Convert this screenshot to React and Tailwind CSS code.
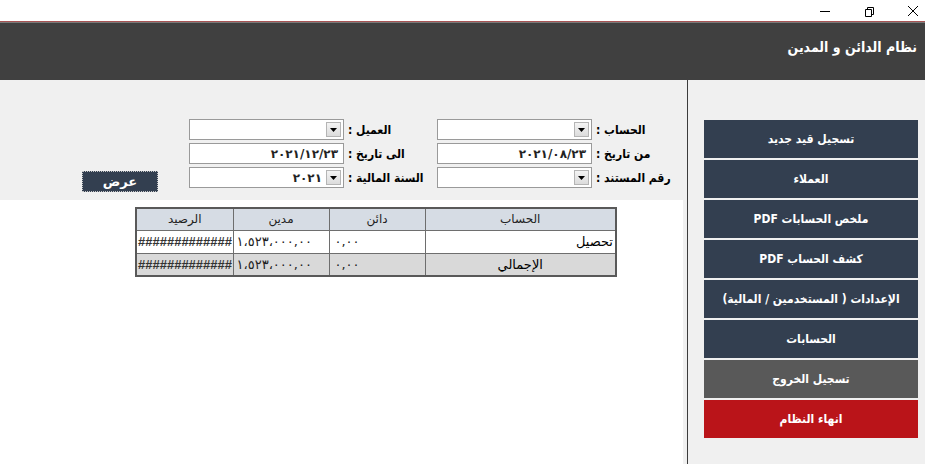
import React from 'react';

const menu = [
  { label: 'تسجيل قيد جديد', color: 'bg-[#333f50]' },
  { label: 'العملاء', color: 'bg-[#333f50]' },
  { label: 'ملخص الحسابات PDF', color: 'bg-[#333f50]' },
  { label: 'كشف الحساب PDF', color: 'bg-[#333f50]' },
  { label: 'الإعدادات ( المستخدمين / المالية)', color: 'bg-[#333f50]' },
  { label: 'الحسابات', color: 'bg-[#333f50]' },
  { label: 'تسجيل الخروج', color: 'bg-[#595959]' },
  { label: 'انهاء النظام', color: 'bg-[#ba1419]' },
];

const rows = [
  { name: 'تحصيل', bg: 'bg-white', align: 'text-right px-[2px]' },
  { name: 'الإجمالي', bg: 'bg-[#d9d9d9]', align: 'text-center' },
];

const Arrow = () => (
  <div className="absolute right-[2px] top-[2px] bottom-[2px] w-[15px] bg-gradient-to-b from-[#f4f4f4] to-[#dcdcdc] border border-[#b5b5b5] flex items-center justify-center">
    <svg width="7" height="4" viewBox="0 0 7 4">
      <path d="M0 0h7L3.5 4z" fill="#000" />
    </svg>
  </div>
);

const Field = ({ value, select }) => (
  <div className="relative w-[155px] h-[21px] bg-white border border-[#9a9a9a] flex items-center justify-end">
    <span dir="ltr" className={`text-[12px] font-bold text-[#222] ${select ? 'mr-[21px]' : 'mr-[5px]'}`}>{value}</span>
    {select && <Arrow />}
  </div>
);

const Label = ({ text, w }) => (
  <div dir="rtl" className={`${w} h-[21px] ml-[4px] flex items-center justify-end text-[12px] font-bold text-black whitespace-nowrap font-['DejaVu_Sans_Condensed','DejaVu_Sans',sans-serif]`}>
    {text}
  </div>
);

const App = () => {
  return (
    <div className="w-[925px] h-[464px] overflow-hidden bg-white font-['DejaVu_Sans',sans-serif]">
      <div className="h-[21px] flex items-center justify-end pr-[6px] gap-[32px]">
        <svg width="12" height="12" viewBox="0 0 12 12">
          <path d="M1 6.5h10" stroke="#000" strokeWidth="1" />
        </svg>
        <svg width="12" height="12" viewBox="0 0 12 12">
          <path d="M2.5 4.5h6v7h-6z M4.5 4.5V2.5h6v7h-2" stroke="#000" strokeWidth="1" fill="none" />
        </svg>
        <svg width="12" height="12" viewBox="0 0 12 12">
          <path d="M1 1l10 10M11 1L1 11" stroke="#000" strokeWidth="1" />
        </svg>
      </div>
      <div className="h-[1px] bg-[#a85454]" />
      <div className="h-[1px] bg-[#7a7a7a]" />
      <div className="h-[57px] bg-[#404040] flex justify-end pr-[8px] pt-[14px]">
        <h1 dir="rtl" className="text-white font-bold text-[14px] font-['DejaVu_Sans_Condensed','DejaVu_Sans',sans-serif]">نظام الدائن و المدين</h1>
      </div>

      <div className="flex h-[384px] bg-[#f0f0f0]">
        <div className="w-[683px] flex flex-col">
          <div className="h-[120px] flex pl-[82px] pt-[39px]">
            <div className="w-[76px] pt-[52px]">
              <button className="w-[76px] h-[21px] bg-[#333f50] border border-dotted border-[#c8c8c8] text-white font-bold text-[13px] leading-none flex items-center justify-center">
                عرض
              </button>
            </div>
            <div className="ml-[31px] flex flex-col gap-[3px]">
              <div className="flex">
                <Field select />
                <Label text="العميل :" w="w-[89px]" />
              </div>
              <div className="flex">
                <Field value="٢٠٢١/١٢/٢٣" />
                <Label text="الى  تاريخ :" w="w-[89px]" />
              </div>
              <div className="flex">
                <Field value="٢٠٢١" select />
                <Label text="السنة المالية :" w="w-[89px]" />
              </div>
            </div>
            <div className="flex flex-col gap-[3px]">
              <div className="flex">
                <Field select />
                <Label text="الحساب :" w="w-[83px]" />
              </div>
              <div className="flex">
                <Field value="٢٠٢١/٠٨/٢٣" />
                <Label text="من تاريخ :" w="w-[83px]" />
              </div>
              <div className="flex">
                <Field select />
                <Label text="رقم المستند :" w="w-[83px]" />
              </div>
            </div>
          </div>
          <div className="flex-1 bg-white pl-[135px] pt-[7px]">
            <table className="w-[482px] border-collapse border-2 border-[#595959] text-[12px] text-[#222] table-fixed">
              <thead>
                <tr className="h-[22px] bg-[#d6dce4]">
                  <th className="w-[97px] border border-[#6e6e6e] font-normal">الرصيد</th>
                  <th className="w-[96px] border border-[#6e6e6e] font-normal">مدين</th>
                  <th className="w-[96px] border border-[#6e6e6e] font-normal">دائن</th>
                  <th className="border border-[#6e6e6e] font-normal">الحساب</th>
                </tr>
              </thead>
              <tbody>
                {rows.map((r) => (
                  <tr key={r.name} className={`h-[23px] ${r.bg}`}>
                    <td className="border border-[#6e6e6e] px-[1px] overflow-hidden whitespace-nowrap font-bold text-[13px] font-['Liberation_Sans',sans-serif] text-[#333]">#############</td>
                    <td dir="ltr" className="border border-[#6e6e6e] px-[3px] text-left text-[13px] whitespace-nowrap overflow-hidden">١،٥٢٣،٠٠٠,٠٠</td>
                    <td dir="ltr" className="border border-[#6e6e6e] px-[5px] text-left text-[13px]">٠,٠٠</td>
                    <td dir="rtl" className={`border border-[#6e6e6e] ${r.align} text-[13px] text-black`}>{r.name}</td>
                  </tr>
                ))}
              </tbody>
            </table>
          </div>
        </div>
        <div className="w-[4px]" />
        <div className="w-[1px] bg-[#3c3c3c]" />
        <div className="flex-1 pl-[16px] pr-[7px] pt-[40px] flex flex-col gap-[2px]">
          {menu.map((item) => (
            <div
              key={item.label}
              dir="rtl"
              className={`${item.color} h-[38px] flex items-center justify-center text-white font-bold text-[12px] font-['DejaVu_Sans_Condensed','DejaVu_Sans',sans-serif]`}
            >
              {item.label}
            </div>
          ))}
        </div>
      </div>
    </div>
  );
};

export default App;
